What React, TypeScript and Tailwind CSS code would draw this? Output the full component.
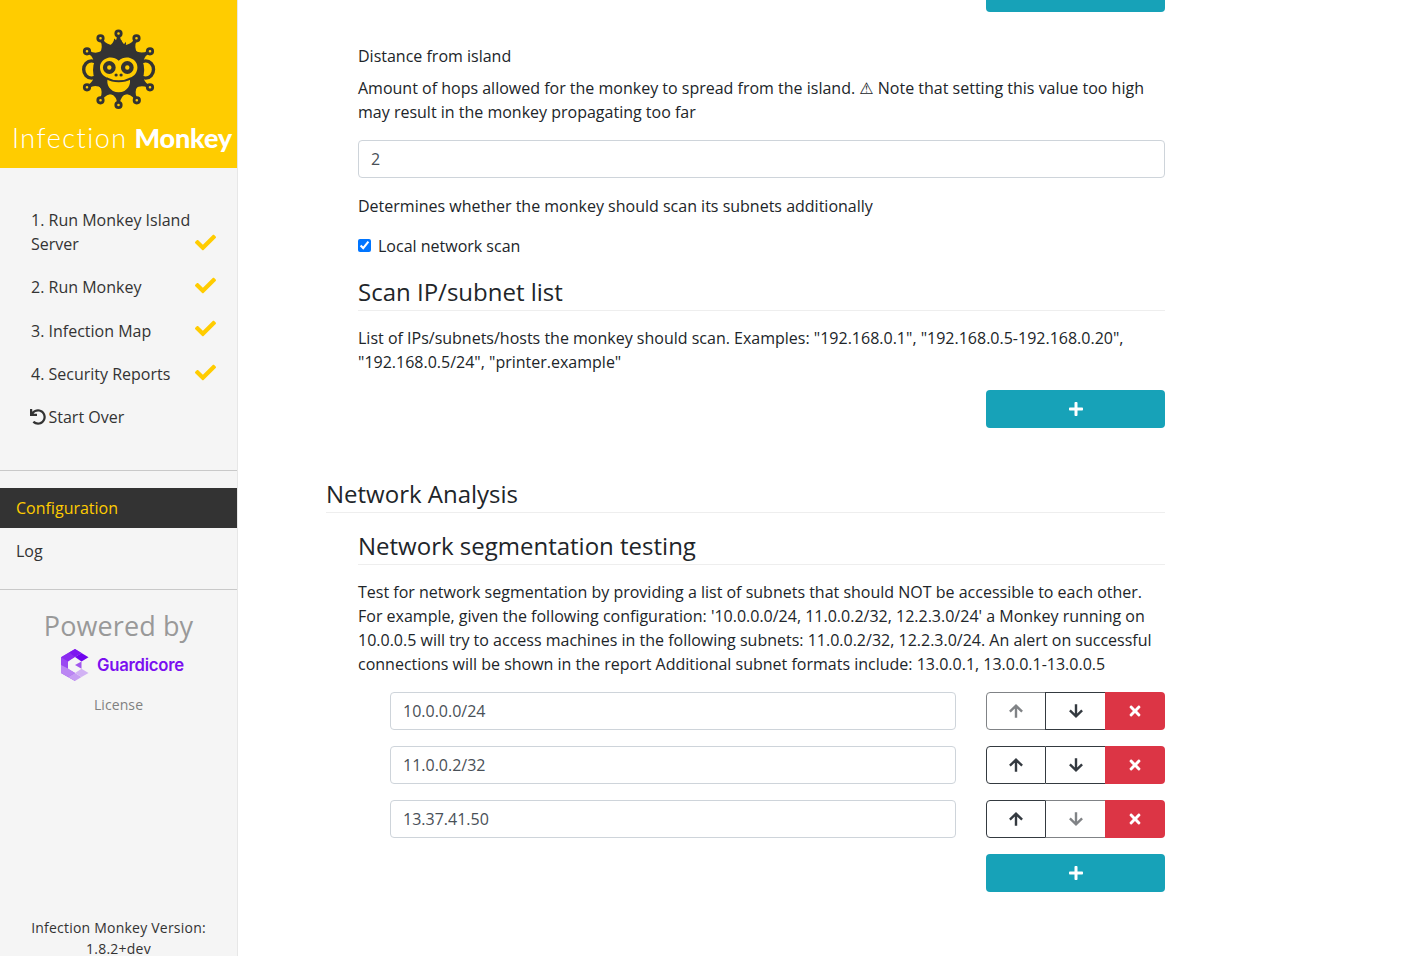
import React from "react";
import { FaCheck, FaUndo, FaPlus, FaTimes } from "react-icons/fa";

const steps = ["2. Run Monkey", "3. Infection Map", "4. Security Reports"];

const knobs: [number, number][] = [
  [48.5, 13.5], [30.5, 18.3], [66.5, 18.3], [17, 31.3], [80, 31.3],
  [17, 67.3], [80, 67.3], [30.5, 80.3], [66.8, 80.3], [48.5, 85],
];

/* Tapered stem: narrow at the knob, flaring out where it meets the head. */
function stem([x, y]: [number, number]) {
  const cx = 48.6;
  const cy = 49.5;
  const d = Math.hypot(x - cx, y - cy);
  const ux = (x - cx) / d;
  const uy = (y - cy) / d;
  const at = (r: number, w: number) => `${cx + ux * r - uy * w} ${cy + uy * r + ux * w}`;
  return `M${at(d - 2, 1.5)}Q${at(27.5, 1.6)} ${at(23.5, 8)}L${at(23.5, -8)}Q${at(27.5, -1.6)} ${at(d - 2, -1.5)}Z`;
}

function MonkeyLogo() {
  return (
    <svg width="100" height="95" viewBox="0 0 100 95" fill="none">
      {knobs.map((k, i) => (
        <path key={i} d={stem(k)} fill="#333" />
      ))}
      {knobs.map(([x, y], i) => (
        <circle key={i} cx={x} cy={y} r="2.7" fill="#ffcc00" stroke="#333" strokeWidth="2.8" />
      ))}
      <ellipse cx="21.5" cy="49.5" rx="7.8" ry="8.6" fill="#ffcc00" stroke="#333" strokeWidth="3.4" />
      <ellipse cx="75.7" cy="49.5" rx="7.8" ry="8.6" fill="#ffcc00" stroke="#333" strokeWidth="3.4" />
      <circle cx="48.6" cy="50" r="25.6" fill="#333" />
      <path d="M38 27C42 24.5 44 21.5 44.3 18.5C46.5 20 47 22 46.8 24.5C49.5 23 50.5 21.5 50.8 19.5C52.3 21 52.3 23 51.8 24.8C54 24.5 55 23.5 55.7 21.8C56.5 23.5 56 25 55 26.3C56.5 26.3 57.5 26 58.8 25C58.5 27 57.5 28.5 56 29.5Z" fill="#333" />
      <path d="M48.7 40.8C45.5 37.5 41 37 37.5 38C32.5 39.5 30 43 30 47.5C30 52 33 56.5 38 58C35.5 64 40 72.3 48.7 72.3C57.4 72.3 61.8 64 59.5 58C64.5 56.5 67.4 52 67.4 47.5C67.4 43 65 39.5 60 38C56.5 37 52 37.5 48.7 40.8Z" fill="#ffcc00" />
      <path d="M36.7 58.3C43.5 62.2 54 62.2 60.8 58.3" stroke="#333" strokeWidth="2" />
      <circle cx="39.3" cy="47.5" r="4.3" stroke="#333" strokeWidth="4.2" />
      <circle cx="57.3" cy="47.5" r="4.3" stroke="#333" strokeWidth="4.2" />
      <circle cx="46.1" cy="55" r="1.6" fill="#333" />
      <circle cx="51.1" cy="55" r="1.6" fill="#333" />
    </svg>
  );
}

function GuardicoreLogo() {
  return (
    <div className="flex h-8 items-center">
      <svg width="28" height="32" viewBox="0 0 28 32">
        <path d="M0 8.2L14 0L20.5 4L9 10.5L7 12.5V20L14 24V32L0 24Z" fill="#9a48f2" />
        <path d="M0 8.2L8 3.5L14 8L7 12.5Z" fill="#8a2bf0" />
        <path d="M8 3.5L14 0L20.5 4L14 8Z" fill="#7d16f0" />
        <path d="M14 8L20.5 4L27.5 8.2L20.5 12.4Z" fill="#6f04ee" />
        <path d="M0 16L7 19.5L14 24L7 28L0 24Z" fill="#bb86f3" />
        <path d="M14 24L20.5 28L14 32L7 28Z" fill="#c79ef3" />
        <path d="M14 24L20.5 19.8L27.5 24L20.5 28Z" fill="#d2b3f4" />
        <path d="M14 16L20.5 12.4V19.8Z" fill="#a257ed" />
      </svg>
      <span className="ml-[8px] w-[87px] font-[Inter] text-[16.7px] leading-8 font-semibold tracking-[-0.25px] text-[#7a0ff0]">Guardicore</span>
    </div>
  );
}

function Arrow({ down = false, muted = false }: { down?: boolean; muted?: boolean }) {
  return (
    <svg width="14" height="14" viewBox="0 0 14 14" fill="none" strokeWidth="2.4" className={(down ? "rotate-180 " : "") + (muted ? "stroke-[#808386]" : "stroke-[#343a40]")}>
      <path d="M7 13.8V1.9M0.9 7.7L7 1.7L13.1 7.7" />
    </svg>
  );
}

function AddButton() {
  return (
    <button className="flex h-[38px] w-[179px] items-center justify-center rounded-[4px] bg-[#17a2b8] text-white">
      <FaPlus size={16} />
    </button>
  );
}

function SubnetRow({ value, first = false, last = false }: { value: string; first?: boolean; last?: boolean }) {
  return (
    <div className="mb-4 ml-8 flex h-[38px] justify-between">
      <input readOnly value={value} className="h-[38px] w-[566px] rounded-[4px] border border-[#ced4da] px-3 text-[#495057]" />
      <div className="flex w-[179px]">
        <button className={"flex w-[60px] shrink-0 items-center justify-center rounded-l-[4px] border " + (first ? "border-[#808386]" : "border-[#343a40]")}>
          <Arrow muted={first} />
        </button>
        <button className={"flex shrink-0 items-center justify-center border-y " + (last ? "border-[#808386]" : "border-[#343a40]") + (first ? " -ml-px w-[60px] border-l" : " w-[59px]")}>
          <Arrow down muted={last} />
        </button>
        <button className="flex flex-1 items-center justify-center rounded-r-[4px] bg-[#dc3545] text-white">
          <FaTimes size={16} />
        </button>
      </div>
    </div>
  );
}

function Heading({ children }: { children: React.ReactNode }) {
  return <h2 className="mb-[15px] h-[34px] border-b border-[#eeeeee] text-2xl leading-[29px]">{children}</h2>;
}

export default function App() {
  return (
    <div className="flex h-[956px] w-[1426px] overflow-hidden bg-white font-['Open_Sans',sans-serif] text-base leading-6 text-[#212529]">
      <aside className="flex w-[238px] shrink-0 flex-col border-r border-[#e7e7e7] bg-[#f5f5f5] text-[#333]">
        <div className="flex h-[168px] shrink-0 flex-col bg-[#ffcc00] pt-5">
          <div className="pl-[70px]">
            <MonkeyLogo />
          </div>
          <div className="flex justify-between pr-[5px] pl-[12px] font-[Lato] text-[27px] leading-[46px] whitespace-nowrap text-white [font-variant-ligatures:none]">
            <span className="font-light tracking-[1.5px]">Infection</span>
            <span className="font-black tracking-[-0.2px]">Monkey</span>
          </div>
        </div>
        <nav className="pt-10">
          <div className="relative h-12 pr-10 pl-[31px]">
            1. Run Monkey Island Server
            <FaCheck size={21} className="absolute top-6 right-[21px] text-[#ffcc00]" />
          </div>
          {steps.map((s) => (
            <div key={s} className="mt-[19.4px] flex h-6 items-center justify-between pr-[21px] pl-[31px]">
              <span>{s}</span>
              <FaCheck size={21} className="-mt-[4px] text-[#ffcc00]" />
            </div>
          ))}
          <div className="mt-[19px] flex h-6 items-center pl-[30px]">
            <FaUndo size={16} className="mr-[2.5px]" />
            Start Over
          </div>
        </nav>
        <hr className="mt-[40.8px] border-[#c9c9c9]" />
        <div className="mt-[17px] flex h-10 items-center bg-[#333] px-4 text-[#ffcc00]">Configuration</div>
        <div className="mt-[3px] flex h-10 items-center px-4">Log</div>
        <hr className="mt-[18px] border-[#c9c9c9]" />
        <div className="flex flex-col items-center pt-[16px]">
          <div className="text-[27px] leading-10 tracking-[0.1px] text-[#999]">Powered by</div>
          <div className="mt-[3px] pl-2">
            <GuardicoreLogo />
          </div>
          <div className="mt-[13px] text-sm leading-[21px] tracking-[0.1px] text-[#808080]">License</div>
        </div>
        <div className="mt-auto -mb-[3px] px-6 text-center text-sm leading-[21px] tracking-[0.22px]">
          Infection Monkey Version:
          <br />
          1.8.2+dev
        </div>
      </aside>
      <main className="ml-[88px] w-[839px]">
        <section className="pl-8">
          <div className="-mt-[26px] mb-8 flex justify-end">
            <AddButton />
          </div>
          <label className="block">Distance from island</label>
          <p className="mt-2">
            Amount of hops allowed for the monkey to spread from the island. <span className="font-['DejaVu_Sans'] leading-none">⚠</span> Note that setting this value too high may result in the monkey propagating too far
          </p>
          <input readOnly value="2" className="mt-4 block h-[38px] w-full rounded-[4px] border border-[#ced4da] px-3 text-[#495057]" />
          <p className="mt-4">Determines whether the monkey should scan its subnets additionally</p>
          <label className="mt-4 mb-[19px] flex h-6 items-center">
            <input type="checkbox" checked readOnly className="mr-[7px] mb-[2px] h-[13px] w-[13px]" />
            Local network scan
          </label>
          <Heading>Scan IP/subnet list</Heading>
          <p className="mb-4">List of IPs/subnets/hosts the monkey should scan. Examples: "192.168.0.1", "192.168.0.5-192.168.0.20", "192.168.0.5/24", "printer.example"</p>
          <div className="flex justify-end">
            <AddButton />
          </div>
        </section>
        <section className="pt-[51px]">
          <Heading>Network Analysis</Heading>
          <div className="pt-[3px] pl-8">
            <Heading>Network segmentation testing</Heading>
            <p className="mb-4">
              Test for network segmentation by providing a list of subnets that should NOT be accessible to each other. For example, given the following configuration: '10.0.0.0/24, 11.0.0.2/32, 12.2.3.0/24' a Monkey running on 10.0.0.5 will try to access machines in the following subnets: 11.0.0.2/32, 12.2.3.0/24. An alert on successful connections will be shown in the report Additional subnet formats include: 13.0.0.1, 13.0.0.1-13.0.0.5
            </p>
            <SubnetRow value="10.0.0.0/24" first />
            <SubnetRow value="11.0.0.2/32" />
            <SubnetRow value="13.37.41.50" last />
            <div className="flex justify-end">
              <AddButton />
            </div>
          </div>
        </section>
      </main>
    </div>
  );
}
